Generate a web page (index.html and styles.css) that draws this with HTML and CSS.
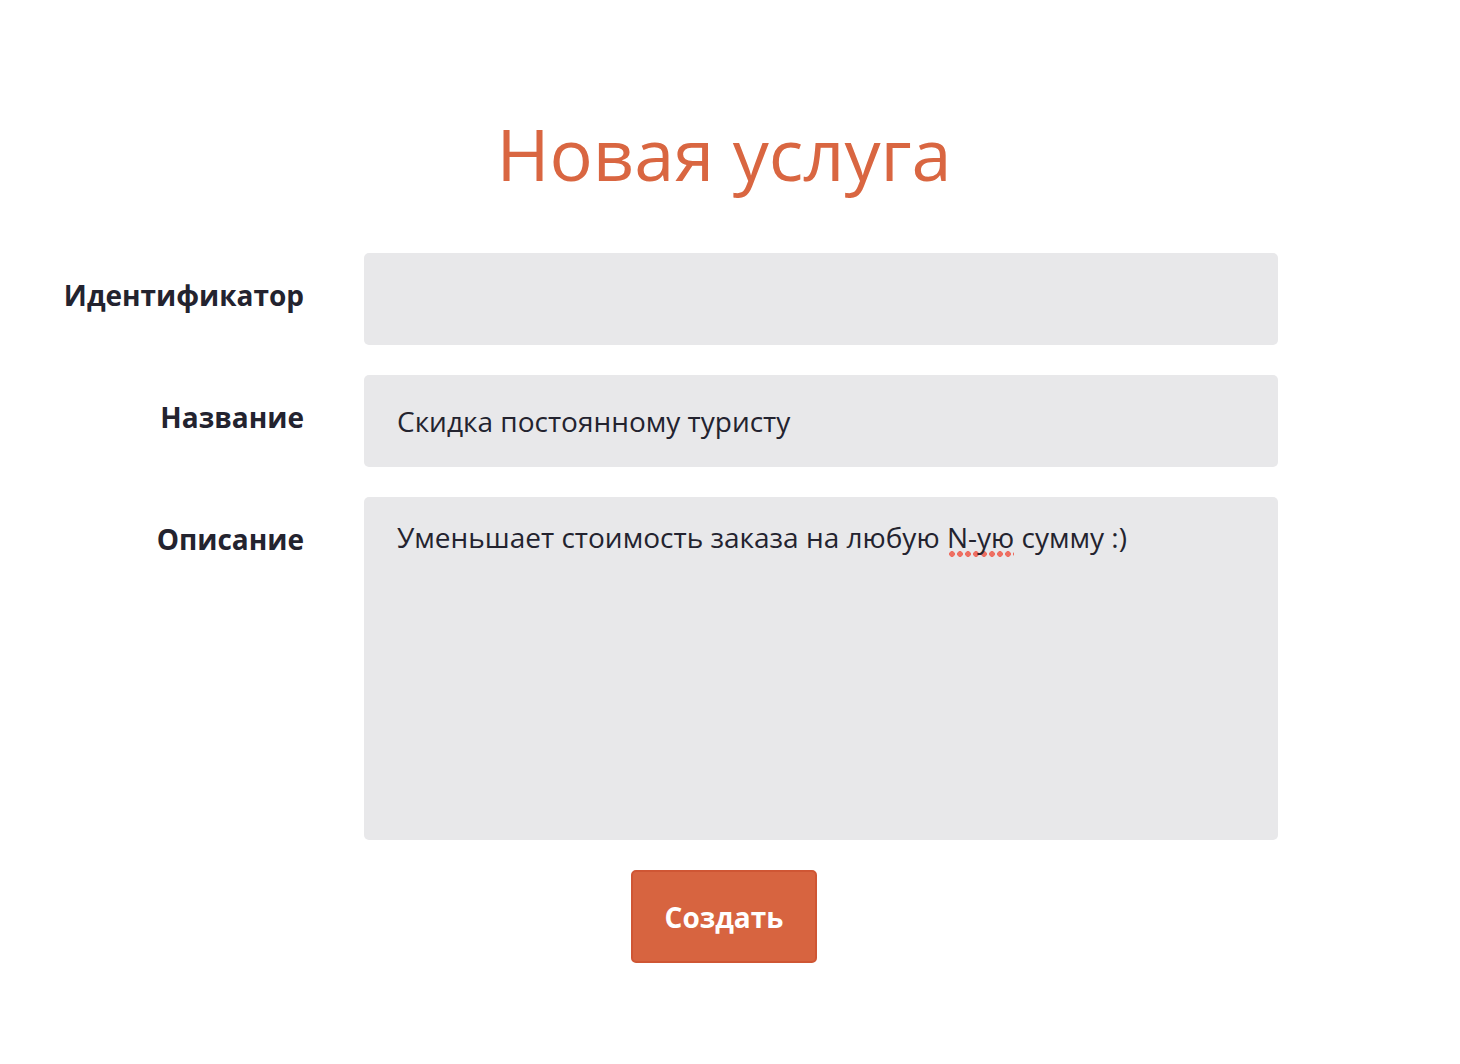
FILE: index.html
```html
<!DOCTYPE html>
<html lang="ru">
<head>
    <meta charset="UTF-8">
    <title>Новая услуга</title>
    <link rel="stylesheet" href="styles.css">
</head>
<body>
    <div class="page">
        <h1 class="title">Новая услуга</h1>
        <form class="service-form">
            <label class="form-label" for="service-id">Идентификатор</label>
            <input class="form-field" type="text" id="service-id">

            <label class="form-label" for="service-name">Название</label>
            <input class="form-field" type="text" id="service-name" value="Скидка постоянному туристу" spellcheck="false">

            <label class="form-label" for="service-desc">Описание</label>
            <div class="form-field form-area" id="service-desc" contenteditable="true" spellcheck="false">Уменьшает стоимость заказа на любую <span class="misspelled">N-ую</span> сумму :)</div>

            <div class="form-actions">
                <button class="btn-create" type="button">Создать</button>
            </div>
        </form>
    </div>
</body>
</html>
```

FILE: styles.css
```css
body {
    margin: 0;
    background-color: #fff;
    color: #23232f;
    font-family: "Open Sans", "Noto Sans", Arial, sans-serif;
}
.page {
    width: 1108px;
    margin: 0 0 0 170px;
    padding-top: 104px;
}
.title {
    margin: 0 0 51px;
    font-size: 72px;
    font-weight: 400;
    color: #d96641;
    text-align: center;
}
.service-form {
    display: grid;
    grid-template-columns: 134px 914px;
    column-gap: 60px;
    row-gap: 30px;
}
.form-label {
    display: flex;
    justify-content: flex-end;
    white-space: nowrap;
    padding-top: 23px;
    font-size: 28px;
    font-weight: 700;
}
.form-field {
    box-sizing: border-box;
    width: 100%;
    height: 92px;
    padding: 0 33px;
    border: none;
    border-radius: 5px;
    background-color: #e8e8ea;
    color: #23232f;
    font-family: inherit;
    font-size: 28px;
    outline: none;
}
.form-area {
    height: 343px;
    padding-top: 21px;
    line-height: 1.36;
}
.misspelled {
    padding-bottom: 1px;
    background-image: radial-gradient(circle, #ee6f62 2.6px, transparent 3.1px);
    background-size: 8px 6px;
    background-repeat: repeat-x;
    background-position: 1px 100%;
}
.form-actions {
    grid-column: 1 / -1;
    display: flex;
    justify-content: center;
}
.btn-create {
    width: 186px;
    height: 93px;
    border: 2px solid #cf5634;
    border-radius: 5px;
    background-color: #d76440;
    color: #fff;
    font-family: inherit;
    font-size: 28px;
    font-weight: 700;
    cursor: pointer;
}
.btn-create:hover {
    background-color: #cc5a37;
}
```
